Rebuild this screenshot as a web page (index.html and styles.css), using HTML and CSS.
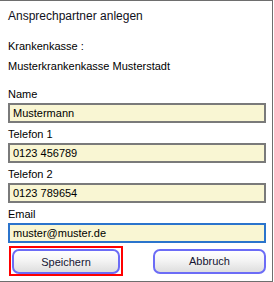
FILE: index.html
```html
<!DOCTYPE html>
<html lang="de">
<head>
  <meta charset="UTF-8">
  <title>Ansprechpartner anlegen</title>
  <link rel="stylesheet" href="styles.css">
</head>
<body>
<div class="dialog">
  <div class="title">Ansprechpartner anlegen</div>
  <div class="info">
    <div class="info-label">Krankenkasse :</div>
    <div class="info-value">Musterkrankenkasse Musterstadt</div>
  </div>
  <form class="fields">
    <div class="field">
      <label for="name">Name</label>
      <input type="text" id="name" value="Mustermann">
    </div>
    <div class="field">
      <label for="tel1">Telefon 1</label>
      <input type="text" id="tel1" value="0123 456789">
    </div>
    <div class="field">
      <label for="tel2">Telefon 2</label>
      <input type="text" id="tel2" value="0123 789654">
    </div>
    <div class="field">
      <label for="email">Email</label>
      <input type="text" id="email" class="focused" value="muster@muster.de">
    </div>
  </form>
  <div class="buttons">
    <div class="default-frame">
      <button type="button" class="btn">Speichern</button>
    </div>
    <button type="button" class="btn">Abbruch</button>
  </div>
</div>
</body>
</html>
```

FILE: styles.css
```css
body {
  margin: 0;
  padding: 0;
  background: #fff;
  font-family: "Liberation Sans", Arial, sans-serif;
  font-size: 11px;
  color: #000;
}

.dialog {
  box-sizing: border-box;
  width: 273px;
  height: 282px;
  border-top: 1px solid #6e6e6e;
  border-right: 1px solid #6e6e6e;
  border-bottom: 1px solid #6e6e6e;
  padding: 7px 6px 0 8px;
}

.title {
  font-size: 12px;
  line-height: 16px;
  color: #101020;
}

.info {
  margin-top: 15px;
}

.info-label,
.info-value {
  line-height: 14px;
}

.info-value {
  margin-top: 6px;
}

.fields {
  margin: 13px 0 0;
}

.field label {
  display: block;
  line-height: 16px;
}

.field input {
  display: block;
  box-sizing: border-box;
  width: 258px;
  height: 20px;
  margin: 1px 0 3px;
  padding: 0 3px;
  border: 2px solid #7a7a7a;
  background: #f9f6d3;
  font-family: "Liberation Sans", Arial, sans-serif;
  font-size: 11px;
  color: #000;
  outline: none;
}

.field input.focused {
  border-color: #2b74cc;
}

.buttons {
  display: flex;
  justify-content: space-between;
  align-items: center;
  margin-top: 3px;
  padding-left: 1px;
  width: 257px;
}

.default-frame {
  border: 2px solid #f00;
  padding: 1px 1px 0;
}

.btn {
  box-sizing: border-box;
  width: 108px;
  height: 25px;
  border: 2px solid #6c6cf6;
  border-radius: 7px;
  background: linear-gradient(#ffffff 0%, #f4f4f4 45%, #dedede 100%);
  font-family: "Liberation Sans", Arial, sans-serif;
  font-size: 11px;
  color: #141432;
  padding: 0;
}

.buttons > .btn {
  width: 113px;
}
```
